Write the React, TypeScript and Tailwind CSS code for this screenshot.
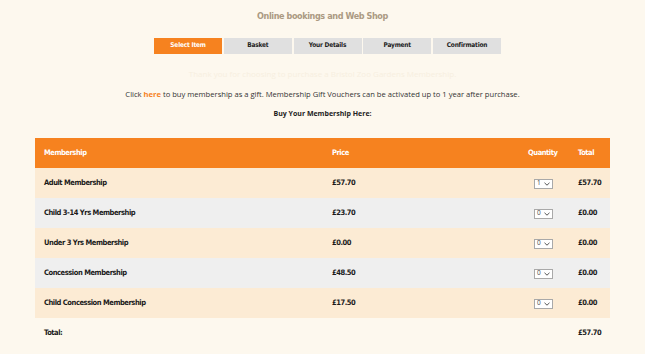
import React from 'react';

const display = { fontFamily: '"Liberation Sans Narrow", "DejaVu Sans Condensed", Roboto, sans-serif' };
const body = { fontFamily: '"Open Sans", "Noto Sans", sans-serif' };

const steps = ['Select Item', 'Basket', 'Your Details', 'Payment', 'Confirmation'];

const rows = [
  { name: 'Adult Membership', price: '£57.70', qty: '1', total: '£57.70' },
  { name: 'Child 3-14 Yrs Membership', price: '£23.70', qty: '0', total: '£0.00' },
  { name: 'Under 3 Yrs Membership', price: '£0.00', qty: '0', total: '£0.00' },
  { name: 'Concession Membership', price: '£48.50', qty: '0', total: '£0.00' },
  { name: 'Child Concession Membership', price: '£17.50', qty: '0', total: '£0.00' },
];

// tiny fake select box, native one renders too big at this scale
function QtyBox({ value }: { value: string }) {
  return (
    <div className="ml-[6px] flex h-[10px] w-[19px] items-center justify-between border border-[#a9a9a9] bg-white pl-[2px] pr-[2px]">
      <span className="text-[6.5px] font-normal tracking-normal leading-none text-[#444]" style={body}>{value}</span>
      <svg width="6" height="4" viewBox="0 0 6 4">
        <path d="M0.5 0.8l2.5 2.4 2.5-2.4" fill="none" stroke="#555" strokeWidth="1" />
      </svg>
    </div>
  );
}

export default function App() {
  return (
    <div className="min-h-[354px] w-full bg-[#fdf8ee] pt-[9px]">
      <h1 className="text-center text-[9px] font-bold leading-[14px] tracking-[-0.4px] text-[#ab9a82]" style={display}>
        Online bookings and Web Shop
      </h1>

      <div className="ml-[10px] mt-[15px] flex justify-center gap-[1.75px]">
        {steps.map((s, i) => (
          <div
            key={s}
            className={`flex h-[16px] w-[68px] items-center justify-center text-[6.5px] font-bold tracking-[-0.2px] ${
              i === 0 ? 'bg-[#f6821f] text-white' : 'bg-[#e0e0e0] text-[#222]'
            }`}
            style={display}
          >
            {s}
          </div>
        ))}
      </div>

      <p className="mt-[14px] text-center text-[8px] leading-[12px] text-[#f7efe0]" style={body}>
        Thank you for choosing to purchase a Bristol Zoo Gardens Membership.
      </p>
      <p className="mt-[8px] text-center text-[7.6px] leading-[12px] text-[#333]" style={body}>
        Click <span className="font-bold text-[#f6821f]">here</span> to buy membership as a gift. Membership Gift Vouchers can be activated up to 1 year after purchase.
      </p>
      <p className="mt-[8px] text-center text-[7px] font-bold leading-[12px] text-[#222]" style={body}>
        Buy Your Membership Here:
      </p>

      <div className="mx-[35px] mt-[18px] text-[7.5px] font-bold tracking-[-0.45px]" style={display}>
        <div className="grid h-[30px] grid-cols-[288px_196px_50px_1fr] items-center bg-[#f6821f] pl-[9px] text-white">
          <div>Membership</div>
          <div>Price</div>
          <div>Quantity</div>
          <div>Total</div>
        </div>
        {rows.map((r, i) => (
          <div
            key={r.name}
            className={`grid h-[30px] grid-cols-[288px_196px_50px_1fr] items-center pl-[9px] text-[#1a1a1a] ${
              i % 2 === 0 ? 'bg-[#fcebd4]' : 'bg-[#efefef]'
            }`}
          >
            <div>{r.name}</div>
            <div>{r.price}</div>
            <div className="flex items-center pt-[1px]"><QtyBox value={r.qty} /></div>
            <div>{r.total}</div>
          </div>
        ))}
        <div className="grid h-[30px] grid-cols-[288px_196px_50px_1fr] items-center pl-[9px] text-[#1a1a1a]">
          <div>Total:</div>
          <div></div>
          <div></div>
          <div>£57.70</div>
        </div>
      </div>
    </div>
  );
}
